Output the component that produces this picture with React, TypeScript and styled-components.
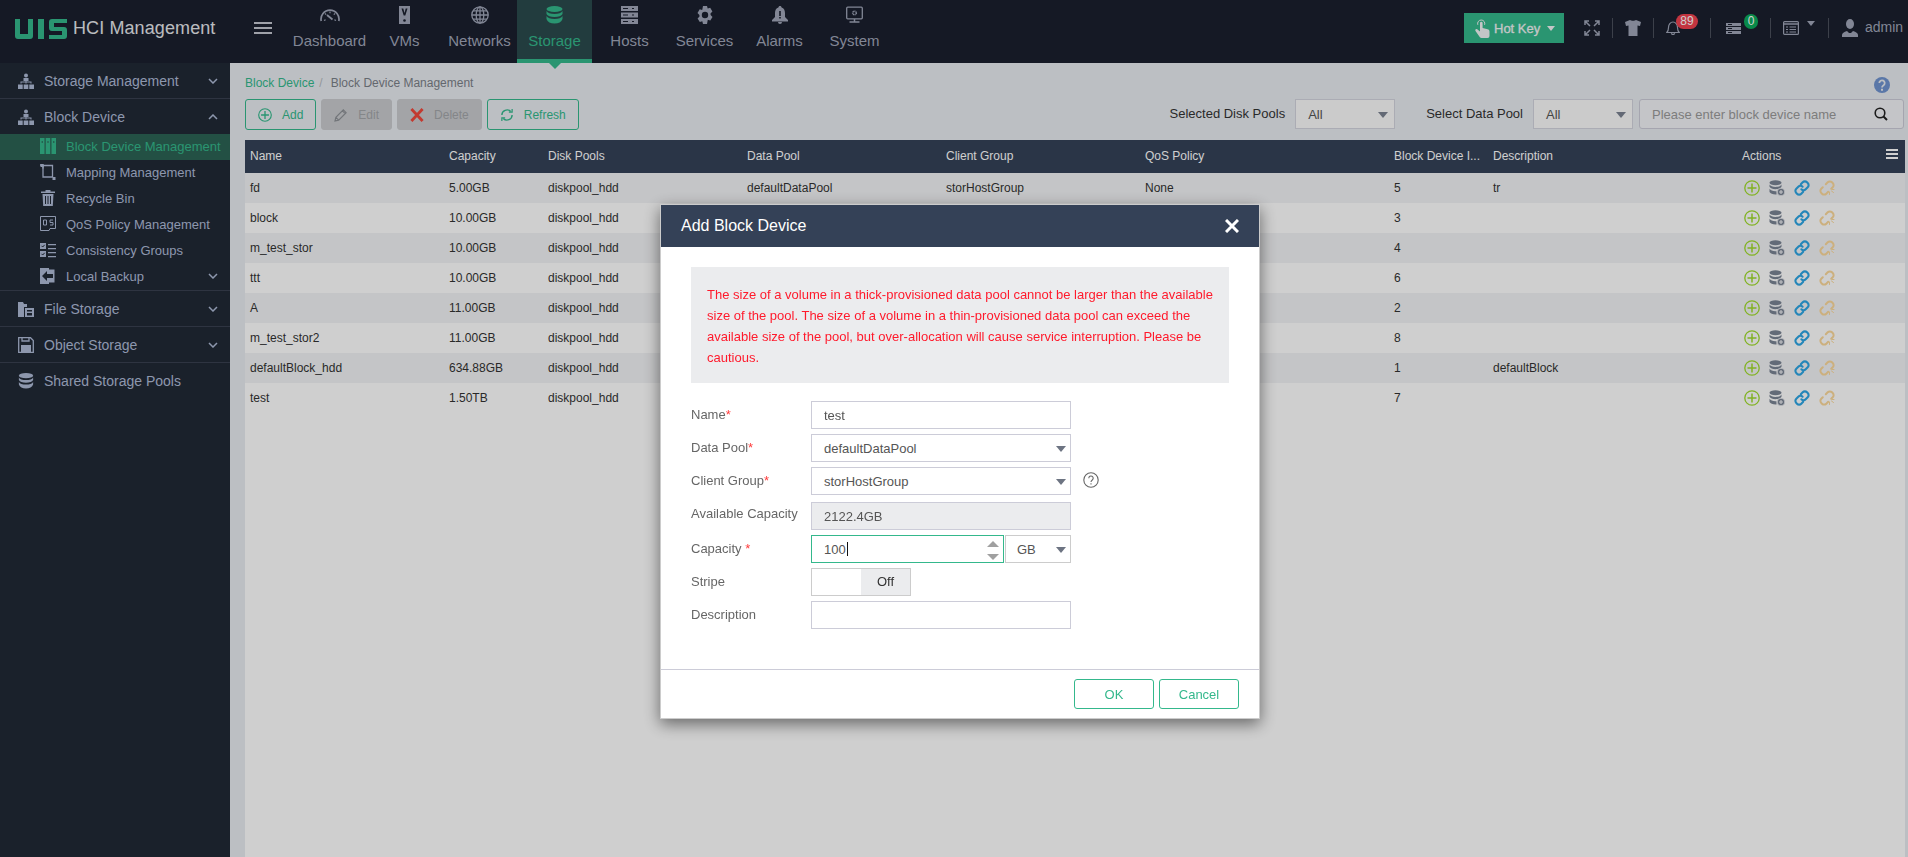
import React from 'react';
import styled, { createGlobalStyle } from 'styled-components';

const accent = '#34b88c';
const navGrey = '#a0a6b8';
const sideGrey = '#aebbd6';

const GlobalStyle = createGlobalStyle`
  html, body {
    margin: 0;
    height: 100%;
    overflow: hidden;
    background: #fff;
    font-family: "Liberation Sans", Arial, sans-serif;
  }
  #root { height: 100%; }
  * { box-sizing: border-box; }
`;

const Shell = styled.div`
  display: flex;
  flex-direction: column;
  height: 100vh;
`;

/* ---------- top bar ---------- */

const TopBar = styled.header`
  display: flex;
  height: 63px;
  flex-shrink: 0;
  background: #1a1f2e;
`;

const LogoBlock = styled.div`
  display: flex;
  align-items: center;
  gap: 6px;
  width: 254px;
  padding: 0 0 6px 15px;
`;

const LogoText = styled.span`
  font-size: 18px;
  letter-spacing: 0.1px;
  color: #e6e8ec;
`;

const Burger = styled.button`
  display: flex;
  flex-direction: column;
  gap: 3px;
  width: 38px;
  height: 12px;
  margin-top: 22px;
  padding: 0;
  border: 0;
  background: none;
  span {
    display: block;
    width: 18px;
    height: 2px;
    flex-shrink: 0;
    background: #c4c7d0;
  }
`;

const Nav = styled.nav`
  display: flex;
`;

const NavItem = styled.a<{ $active?: boolean }>`
  position: relative;
  display: flex;
  flex-direction: column;
  align-items: center;
  width: 75px;
  padding-top: 6px;
  font-size: 15px;
  color: ${p => (p.$active ? accent : navGrey)};
  background: ${p => (p.$active ? '#2b4b4d' : 'transparent')};
  border-bottom: 4px solid ${p => (p.$active ? accent : 'transparent')};
  svg { height: 18px; display: block; }
  span { margin-top: 8px; line-height: 18px; }
  ${p =>
    p.$active &&
    `&::after {
      content: '';
      position: absolute;
      left: 50%;
      bottom: -10px;
      margin-left: -6px;
      border: 6px solid transparent;
      border-bottom: 0;
      border-top-color: ${accent};
      z-index: 2;
    }`}
`;

const Tools = styled.div`
  display: flex;
  align-items: center;
  height: 56px;
  margin-left: auto;
`;

const HotKey = styled.button`
  display: flex;
  align-items: center;
  width: 100px;
  height: 30px;
  margin-right: 8px;
  padding: 0 0 0 10px;
  border: 0;
  font: 13px "Liberation Sans", Arial, sans-serif;
  -webkit-text-stroke: 0.3px #f2f4f5;
  color: #f2f4f5;
  background: ${accent};
  span { margin-left: 4px; }
`;

const Caret = styled.i<{ $color?: string; $shift?: number; $space: number }>`
  display: inline-block;
  width: 0;
  height: 0;
  margin: ${p => p.$shift || 0}px 0 0 ${p => p.$space}px;
  border: 4.5px solid transparent;
  border-bottom: 0;
  border-top: 5px solid ${p => p.$color || '#f2f4f5'};
`;

const Tool = styled.div<{ $w: number; $pad?: number }>`
  position: relative;
  display: flex;
  align-items: center;
  justify-content: ${p => (p.$pad === undefined ? 'center' : 'flex-start')};
  width: ${p => p.$w}px;
  height: 100%;
  padding-left: ${p => p.$pad || 0}px;
  font-size: 14px;
  color: ${navGrey};
`;

const AdminName = styled.span`
  margin-left: 7px;
  padding-bottom: 2px;
`;

const ToolSep = styled.div`
  width: 1px;
  height: 20px;
  flex-shrink: 0;
  background: #4a4f5c;
`;

const Badge = styled.em<{ $bg: string; $left: number; $w: number }>`
  position: absolute;
  top: 14px;
  left: ${p => p.$left}px;
  width: ${p => p.$w}px;
  height: 15px;
  border-radius: 8px;
  font-style: normal;
  font-size: 12px;
  line-height: 15px;
  text-align: center;
  color: #fff;
  background: ${p => p.$bg};
`;

/* ---------- sidebar ---------- */

const Body = styled.div`
  display: flex;
  flex: 1;
  min-height: 0;
`;

const Sidebar = styled.aside`
  width: 230px;
  flex-shrink: 0;
  background: #212936;
`;

const SideGroup = styled.div`
  border-bottom: 1px solid #394050;
  &:last-child { border-bottom: 0; }
`;

const SideHead = styled.div`
  display: flex;
  align-items: center;
  height: 35px;
  padding: 0 12px 0 18px;
  font-size: 14px;
  color: ${sideGrey};
  svg:first-child { width: 16px; height: 16px; margin-right: 10px; flex-shrink: 0; }
`;

const SubItem = styled.div<{ $active?: boolean }>`
  display: flex;
  align-items: center;
  height: 26px;
  padding: 0 12px 2px 40px;
  font-size: 13px;
  white-space: nowrap;
  color: ${p => (p.$active ? accent : sideGrey)};
  background: ${p => (p.$active ? '#2c6354' : 'transparent')};
  svg:first-child { width: 16px; height: 16px; margin-right: 10px; flex-shrink: 0; }
`;

const Chevron = styled.svg`
  width: 10px;
  height: 6px;
  margin-left: auto;
`;

/* ---------- main area ---------- */

const Main = styled.main`
  display: flex;
  flex: 1;
  flex-direction: column;
  min-width: 0;
  padding: 0 3px 0 15px;
  background: #e8ecf1;
`;

const Crumbs = styled.div`
  display: flex;
  align-items: center;
  height: 36px;
  padding-top: 3px;
  font-size: 12px;
  color: #7b8088;
  a { color: ${accent}; }
  i { margin: 0 8px 0 5px; font-style: normal; color: #b6b9bf; }
  svg { width: 16px; height: 16px; margin: 5px 15px 0 auto; }
`;

const ToolRow = styled.div`
  display: flex;
  align-items: flex-start;
  height: 31px;
  margin-bottom: 10px;
`;

const ActionButton = styled.button<{ $disabled?: boolean }>`
  display: flex;
  align-items: center;
  gap: 10px;
  height: 31px;
  margin-right: 5px;
  padding: 0 12px;
  border: 1px solid ${p => (p.$disabled ? '#c9cbce' : accent)};
  border-radius: 3px;
  font: 12px "Liberation Sans", Arial, sans-serif;
  color: ${p => (p.$disabled ? '#a3a5a9' : accent)};
  background: ${p => (p.$disabled ? '#c9cbce' : 'transparent')};
  svg { width: 14px; height: 14px; }
`;

const Filters = styled.div`
  display: flex;
  align-items: center;
  height: 30px;
  margin: 0 1px 0 auto;
  font-size: 13px;
  color: #333;
`;

const FilterLabel = styled.label`
  margin-right: 10px;
  padding-bottom: 2px;
`;

const FilterSelect = styled.div<{ $gap: number }>`
  position: relative;
  width: 100px;
  height: 30px;
  margin-right: ${p => p.$gap}px;
  padding-left: 12px;
  border: 1px solid #d3d4de;
  font-size: 13px;
  line-height: 30px;
  color: #555;
  background: #fafafa;
  &::after {
    content: '';
    position: absolute;
    top: 12px;
    right: 6px;
    border: 5px solid transparent;
    border-bottom: 0;
    border-top: 6px solid #7a8290;
  }
`;

const Search = styled.div`
  display: flex;
  align-items: center;
  justify-content: space-between;
  width: 265px;
  height: 30px;
  padding: 0 15px 0 12px;
  border: 1px solid #ccccd8;
  border-radius: 3px;
  font-size: 13px;
  color: #9a9a9a;
  background: #f2f3f7;
  svg { width: 14px; height: 14px; }
`;

const columns = '199px 99px 199px 199px 199px 249px 99px 249px 1fr';

const GridTable = styled.div`
  flex: 1;
  font-size: 12px;
  background: #fff;
`;

const HeadRow = styled.div`
  position: relative;
  display: grid;
  grid-template-columns: ${columns};
  align-items: center;
  height: 33px;
  padding-bottom: 2px;
  color: #fff;
  background: #344258;
  span { padding-left: 5px; }
  svg { position: absolute; top: 9px; right: 7px; width: 12px; height: 10px; }
`;

const Row = styled.div`
  display: grid;
  grid-template-columns: ${columns};
  align-items: center;
  height: 30px;
  color: #333;
  &:nth-child(even) { background: #f2f3f5; }
  span { padding-left: 5px; }
`;

const RowActions = styled.div`
  display: flex;
  gap: 9px;
  padding-left: 7px;
  svg { width: 16px; height: 16px; }
`;

/* ---------- dialog ---------- */

const Overlay = styled.div`
  position: fixed;
  inset: 0;
  z-index: 10;
  background: rgba(0, 0, 0, 0.19);
`;

const Modal = styled.div`
  position: absolute;
  top: 204px;
  left: 660px;
  display: flex;
  flex-direction: column;
  width: 600px;
  height: 515px;
  border: 1px solid rgba(0, 0, 0, 0.2);
  background: #fff;
  box-shadow: 0 5px 15px rgba(0, 0, 0, 0.5);
`;

const ModalHead = styled.div`
  display: flex;
  align-items: center;
  justify-content: space-between;
  height: 42px;
  padding: 0 20px;
  font-size: 16px;
  color: #fff;
  background: #344157;
  svg { width: 14px; height: 14px; }
`;

const ModalBody = styled.div`
  flex: 1;
  padding: 20px 30px 0;
`;

const Alert = styled.p`
  height: 116px;
  margin: 0 0 18px;
  padding: 17px 12px 0 16px;
  font-size: 13px;
  line-height: 21px;
  color: #ff1a2c;
  background: #ebecee;
`;

const Form = styled.div`
  display: grid;
  grid-template-columns: 120px 260px auto;
  row-gap: 5px;
  align-items: start;
  font-size: 13px;
  color: #666;
`;

const FieldLabel = styled.label<{ $lift?: number }>`
  display: flex;
  align-items: center;
  height: 28px;
  padding-bottom: ${p => p.$lift || 2}px;
  white-space: pre;
  b { font-weight: normal; color: #ff3b3b; }
`;

const Field = styled.div<{ $disabled?: boolean }>`
  grid-column: 2;
  display: flex;
  align-items: center;
  height: 28px;
  padding-left: 12px;
  border: 1px solid #ccccd8;
  color: #555;
  background: ${p => (p.$disabled ? '#ebecee' : '#fff')};
`;

const SelectField = styled(Field)`
  position: relative;
  grid-column: auto;
  &::after {
    content: '';
    position: absolute;
    top: 11px;
    right: 4px;
    border: 5px solid transparent;
    border-bottom: 0;
    border-top: 6px solid #6d7482;
  }
`;

const CapacityGroup = styled.div`
  display: flex;
  gap: 1px;
  height: 28px;
`;

const CapacityInput = styled(Field)`
  position: relative;
  width: 193px;
  border-color: ${accent};
  i { width: 1px; height: 14px; margin-left: 1px; background: #111; }
`;

const Spin = styled.div`
  position: absolute;
  top: 5px;
  right: 4px;
  display: flex;
  flex-direction: column;
  gap: 7px;
  span {
    border: 6px solid transparent;
    height: 0;
    width: 0;
  }
  span:first-child { border-top: 0; border-bottom: 6px solid #a0a0a0; }
  span:last-child { border-bottom: 0; border-top: 6px solid #a0a0a0; }
`;

const UnitSelect = styled(SelectField)`
  width: 66px;
  border-color: #ccc;
  padding-left: 11px;
`;

const Toggle = styled.div`
  display: flex;
  width: 100px;
  height: 28px;
  border: 1px solid #ccc;
  &::before { content: ''; flex: 1; background: #fff; }
  span {
    flex: 1;
    font-size: 13px;
    line-height: 26px;
    text-align: center;
    color: #333;
    background: #ebecee;
  }
`;

const HelpSlot = styled.div`
  height: 30px;
  padding: 5px 0 0 12px;
  svg { display: block; width: 16px; height: 16px; }
`;

const ModalFoot = styled.div`
  display: flex;
  justify-content: flex-end;
  gap: 5px;
  height: 49px;
  padding: 9px 20px 0 0;
  border-top: 1px solid #ccccd8;
`;

const FootButton = styled.button`
  width: 80px;
  height: 30px;
  border: 1px solid ${accent};
  border-radius: 3px;
  font: 13px "Liberation Sans", Arial, sans-serif;
  color: ${accent};
  background: #fff;
`;

/* ---------- icons ---------- */

const DbStack = ({ color = 'currentColor' }: { color?: string }) => (
  <svg viewBox="0 0 17 18" fill={color}>
    <ellipse cx="8.5" cy="3" rx="8" ry="3" />
    <path d="M.5 5c1 2 4 3 8 3s7-1 8-3v3c-1 2-4 3-8 3s-7-1-8-3z" />
    <path d="M.5 10c1 2 4 3 8 3s7-1 8-3v3c-1 3-4 4.500-8 4.500S1.500 16 .5 13z" />
  </svg>
);

const Org = () => (
  <svg viewBox="0 0 16 16" fill="currentColor">
    <circle cx="8" cy="2.500" r="2" />
    <path d="M5.500 5h5v3h-5zM2.500 8.500h11v2h-1v-1h-9v1h-1zM7.500 8h1v2.500h-1z" />
    <path d="M0 11.500h4.700V16H0zM5.700 11.500h4.600V16H5.700zM11.300 11.500H16V16h-4.700z" />
  </svg>
);

const Down = () => (
  <Chevron viewBox="0 0 10 6" fill="none" stroke="currentColor" strokeWidth="1.500">
    <path d="M1 1l4 4 4-4" />
  </Chevron>
);

const Up = () => (
  <Chevron viewBox="0 0 10 6" fill="none" stroke="currentColor" strokeWidth="1.500">
    <path d="M1 5l4-4 4 4" />
  </Chevron>
);

const PlusCircle = ({ color }: { color: string }) => (
  <svg viewBox="0 0 16 16" fill="none" stroke={color} strokeWidth="1.300">
    <circle cx="8" cy="8" r="7.200" />
    <path d="M8 3.500v9M3.500 8h9" strokeWidth="1.500" />
  </svg>
);

const LinkIcon = ({ color }: { color: string }) => (
  <svg viewBox="0 0 16 16" fill="none" stroke={color} strokeWidth="2.100" strokeLinecap="round">
    <path d="M6.800 4.200l1.900-1.900a3 3 0 0 1 4.300 0l.7.7a3 3 0 0 1 0 4.300l-2 2a3 3 0 0 1-4.300 0" />
    <path d="M9.200 11.800l-1.900 1.900a3 3 0 0 1-4.300 0l-.7-.7a3 3 0 0 1 0-4.300l2-2a3 3 0 0 1 4.300 0" />
  </svg>
);

const BrokenLink = ({ color }: { color: string }) => (
  <svg viewBox="0 0 16 16" fill="none" stroke={color} strokeWidth="2" strokeLinecap="round">
    <path d="M6.800 4.200l1.900-1.900a3 3 0 0 1 4.300 0l.7.7a3 3 0 0 1 0 4.300l-1.500 1.500" />
    <path d="M9.200 11.800l-1.900 1.900a3 3 0 0 1-4.300 0l-.7-.7a3 3 0 0 1 0-4.300l1.500-1.500" />
    <path d="M10.500 12v2.500M12.500 11l2 1.500M13 9.500h2" strokeWidth="1" />
  </svg>
);

const DbAdd = () => (
  <svg viewBox="0 0 16 16">
    <g fill="#7a8494">
      <ellipse cx="6.500" cy="2.800" rx="6" ry="2.500" />
      <path d="M.5 4.500c1 1.700 3 2.400 6 2.400s5-.7 6-2.400v2.300c-1 1.700-3 2.400-6 2.400s-5-.7-6-2.400z" />
      <path d="M.5 8.800c1 1.700 3 2.400 6 2.400h1v3.300h-1c-3 0-5-.7-6-2.400z" />
    </g>
    <circle cx="12" cy="12" r="3.800" fill="#7a8494" stroke="#f2f3f5" strokeWidth=".8" />
    <path d="M10 12h4M12 10v4" stroke="#f2f3f5" strokeWidth="1.100" />
  </svg>
);

const nav = [
  {
    label: 'Dashboard',
    icon: (
      <svg viewBox="0 0 20 14" width="20" fill="none" stroke="currentColor" strokeWidth="1.700">
        <path d="M1.200 13a9 9 0 1 1 17.600 0" />
        <path d="M4 12.500l1.600-.8M16 12.500l-1.600-.8M10 3.500v1.800M5 5.500l1.200 1.200M15 5.500l-1.200 1.200" strokeWidth="1.200" />
        <path d="M7 7l5.500 4.500" strokeWidth="1.800" />
      </svg>
    ),
  },
  {
    label: 'VMs',
    icon: (
      <svg viewBox="0 0 11 18" width="11">
        <path d="M0 0h11v18H0z" fill="currentColor" />
        <path d="M2.500 2.500h1.800L5.500 7l1.200-4.500h1.800L6.300 9.500H4.700z" fill="#1a1f2e" />
        <circle cx="5.500" cy="14.500" r="1.300" fill="#1a1f2e" />
      </svg>
    ),
  },
  {
    label: 'Networks',
    icon: (
      <svg viewBox="0 0 18 18" width="18" fill="none" stroke="currentColor" strokeWidth="1.300">
        <circle cx="9" cy="9" r="8.200" />
        <ellipse cx="9" cy="9" rx="3.800" ry="8.200" />
        <path d="M9 .8v16.400M.8 9h16.400M2 4.800h14M2 13.200h14" />
      </svg>
    ),
  },
  { label: 'Storage', icon: <DbStack />, active: true },
  {
    label: 'Hosts',
    icon: (
      <svg viewBox="0 0 17 18" width="17">
        <path d="M0 0h17v5H0zM0 6.500h17v5H0zM0 13h17v5H0z" fill="currentColor" />
        <path d="M2 2h5v1H2zM2 8.500h5v1H2zM2 15h5v1H2zM11 2h2v1h-2zM11 8.500h2v1h-2zM11 15h2v1h-2z" fill="#1a1f2e" />
      </svg>
    ),
  },
  {
    label: 'Services',
    icon: (
      <svg viewBox="0 0 18 18" width="18">
        <path
          fill="currentColor"
          fillRule="evenodd"
          d="M7 0h4l.7 2.600 2.500-.8 2.200 3.700-1.900 1.900.1 1.600 1.900 1.900-2.200 3.700-2.500-.8L11 18H7l-.7-2.700-2.500.8-2.200-3.700 1.900-1.900-.1-1.600-1.900-1.900 2.200-3.700 2.500.8zM9 5.800a3.200 3.200 0 1 0 0 6.400 3.200 3.200 0 0 0 0-6.400z"
        />
      </svg>
    ),
  },
  {
    label: 'Alarms',
    icon: (
      <svg viewBox="0 0 16 18" width="16">
        <path
          fill="currentColor"
          d="M8 0c1 0 1.500.6 1.600 1.500C12 2.300 13 4.500 13 7v4l3 3v1.500H0V14l3-3V7c0-2.500 1-4.700 3.400-5.500C6.500.6 7 0 8 0zM6 16h4a2 2 0 0 1-4 0z"
        />
        <path d="M7.200 5h1.600v5H7.200zM7.200 11h1.600v1.600H7.200z" fill="#1a1f2e" />
      </svg>
    ),
  },
  {
    label: 'System',
    icon: (
      <svg viewBox="0 0 17 17" width="17" fill="none" stroke="currentColor">
        <rect x=".7" y=".7" width="15.600" height="11.600" rx="1" strokeWidth="1.300" />
        <path d="M8.500 12.500v2.500M3.500 15.500h10" strokeWidth="1.500" />
        <circle cx="8.500" cy="6.500" r="1.800" strokeWidth="1.600" strokeDasharray="1 .5" />
      </svg>
    ),
  },
];

// Only the first row's pool columns show above the dialog
const rows = [
  { name: 'fd', size: '5.00GB', id: '5', desc: 'tr', dataPool: 'defaultDataPool', group: 'storHostGroup', qos: 'None' },
  { name: 'block', size: '10.00GB', id: '3' },
  { name: 'm_test_stor', size: '10.00GB', id: '4' },
  { name: 'ttt', size: '10.00GB', id: '6' },
  { name: 'A', size: '11.00GB', id: '2' },
  { name: 'm_test_stor2', size: '11.00GB', id: '8' },
  { name: 'defaultBlock_hdd', size: '634.88GB', id: '1', desc: 'defaultBlock' },
  { name: 'test', size: '1.50TB', id: '7' },
];

const headers = ['Name', 'Capacity', 'Disk Pools', 'Data Pool', 'Client Group', 'QoS Policy', 'Block Device I...', 'Description', 'Actions'];

const App: React.FC = () => (
  <Shell>
    <GlobalStyle />
    <TopBar>
      <LogoBlock>
        <svg viewBox="0 0 52 20" width="52" height="20" fill={accent}>
          <path d="M0 0h5v15h8V0h5v17a3 3 0 0 1-3 3H3a3 3 0 0 1-3-3z" />
          <path d="M23 0h6v20h-6z" />
          <path d="M37 0h15v4H39v4h10a3 3 0 0 1 3 3v6a3 3 0 0 1-3 3H34v-4h13v-4H37a3 3 0 0 1-3-3V3a3 3 0 0 1 3-3z" />
        </svg>
        <LogoText>HCI Management</LogoText>
      </LogoBlock>
      <Burger>
        <span />
        <span />
        <span />
      </Burger>
      <Nav>
        {nav.map(n => (
          <NavItem key={n.label} $active={n.active}>
            {n.icon}
            <span>{n.label}</span>
          </NavItem>
        ))}
      </Nav>
      <Tools>
        <HotKey>
          <svg viewBox="0 0 16 20" width="16" height="20" fill="currentColor">
            <path d="M6 5a1.300 1.300 0 0 1 2.600 0v5l5 1.200c1.200.3 1.900 1.100 1.900 2.300V18a2 2 0 0 1-2 2H7.500a2 2 0 0 1-1.600-.8L1.500 13c-.8-1.200.8-2.600 2-1.500L6 13.500z" />
            <path d="M3.800 6.800a3.600 3.600 0 1 1 6.800 0" fill="none" stroke="currentColor" />
          </svg>
          <span>Hot Key</span>
          <Caret $space={7} />
        </HotKey>
        <Tool $w={40}>
          <svg viewBox="0 0 16 16" width="16" height="16" fill="none" stroke="currentColor" strokeWidth="1.500">
            <path d="M1 5V1h4M1 1l5 5M15 5V1h-4M15 1l-5 5M1 11v4h4M1 15l5-5M15 11v4h-4M15 15l-5-5" />
          </svg>
        </Tool>
        <ToolSep />
        <Tool $w={40}>
          <svg viewBox="0 0 16 16" width="16" height="16" fill="currentColor">
            <path d="M5 0c1 1 5 1 6 0l5 2-1 4-2.500-.6V16h-9V5.400L1 6 0 2z" />
          </svg>
        </Tool>
        <ToolSep />
        <Tool $w={56} $pad={12}>
          <svg viewBox="0 0 14 14" width="14" height="14" fill="none" stroke="currentColor" strokeWidth="1.200">
            <path d="M.8 11.500c1.500-1.500 1.700-3 1.700-5C2.500 3.500 4.500 1 7 1s4.500 2.500 4.500 5.500c0 2 .2 3.500 1.700 5z" />
            <path d="M5.300 12.300a1.800 1.800 0 0 0 3.400 0" />
          </svg>
          <Badge $bg="#f0424f" $left={22} $w={22}>
            89
          </Badge>
        </Tool>
        <ToolSep />
        <Tool $w={59} $pad={15}>
          <svg viewBox="0 0 15 11" width="15" height="11">
            <path d="M0 0h15v3H0zM0 4h15v3H0zM0 8h15v3H0z" fill="currentColor" />
            <path d="M2 1h4v1H2zM2 5h4v1H2zM2 9h4v1H2z" fill="#1a1f2e" />
          </svg>
          <Badge $bg="#0caa5c" $left={33} $w={14}>
            0
          </Badge>
        </Tool>
        <ToolSep />
        <Tool $w={57} $pad={12}>
          <svg viewBox="0 0 16 14" width="16" height="14" fill="none" stroke="currentColor">
            <rect x=".6" y=".6" width="14.800" height="12.800" rx="1" strokeWidth="1.200" />
            <path d="M.6 3h14.800" strokeWidth="1.500" />
            <path d="M3 6h2M3 8.500h2M3 11h2M6.500 6H13M6.500 8.500H13M6.500 11H13" />
          </svg>
          <Caret $color={navGrey} $shift={-9} $space={8} />
        </Tool>
        <ToolSep />
        <Tool $w={79} $pad={13}>
          <svg viewBox="0 0 16 18" width="16" height="18" fill="currentColor">
            <ellipse cx="8" cy="5" rx="4" ry="5" />
            <path d="M0 18v-2c0-2 2-3 5-4l2 2h2l2-2c3 1 5 2 5 4v2z" />
          </svg>
          <AdminName>admin</AdminName>
        </Tool>
      </Tools>
    </TopBar>
    <Body>
      <Sidebar>
        <SideGroup>
          <SideHead>
            <Org />
            Storage Management
            <Down />
          </SideHead>
        </SideGroup>
        <SideGroup>
          <SideHead>
            <Org />
            Block Device
            <Up />
          </SideHead>
          <SubItem $active>
            <svg viewBox="0 0 16 16" fill={accent}>
              <path d="M0 0h4.500v16H0zM5.700 0h4.500v16H5.700zM11.500 0H16v16h-4.500z" />
              <path d="M1.700 3h1v2h-1zM7.500 3h1v2h-1zM13.300 3h1v2h-1z" fill="#2c6354" />
            </svg>
            Block Device Management
          </SubItem>
          <SubItem>
            <svg viewBox="0 0 16 16" fill="none" stroke="currentColor" strokeWidth="1.300">
              <path d="M3 1.500h9.500V13H3z" />
              <path d="M.5 0h3v3h-3zM12.500 13h3v3h-3z" fill="currentColor" stroke="none" />
              <path d="M0 1h3v3.500" />
            </svg>
            Mapping Management
          </SubItem>
          <SubItem>
            <svg viewBox="0 0 16 16" fill="currentColor">
              <path d="M5.500 0h5v1.500H15V3H1V1.500h4.500z" />
              <path d="M2.500 4h11l-.7 12H3.200zM5 6v8h1V6zM7.500 6v8h1V6zM10 6v8h1V6z" fillRule="evenodd" />
            </svg>
            Recycle Bin
          </SubItem>
          <SubItem>
            <svg viewBox="0 0 16 16" fill="none" stroke="currentColor">
              <path d="M.5.500h15v12H10l-1 2H.5z" />
              <path d="M3.500 4h3v5h-3zM13 4h-3v2.500h3V9h-3" />
            </svg>
            QoS Policy Management
          </SubItem>
          <SubItem>
            <svg viewBox="0 0 16 16" fill="currentColor">
              <path d="M0 1h6v6H0zM0 9h6v6H0z" />
              <path d="M8 2h8v1.200H8zM8 6h8v1.200H8zM8 10h8v1.200H8zM8 14h8v1.200H8z" />
              <path d="M1.500 3.800l1.200 1.200 2-2.200M1.500 11.800l1.200 1.200 2-2.200" stroke="#212936" fill="none" />
            </svg>
            Consistency Groups
          </SubItem>
          <SubItem>
            <svg viewBox="0 0 16 16" fill="currentColor">
              <path d="M0 0h16v16H0z" />
              <path d="M9 3l5 5-5 5v-3H3V6h6z" transform="rotate(180 8 8)" fill="#212936" />
              <path d="M9 0h7v16H9v-1.500h5.500v-13H9z" fill="#212936" />
            </svg>
            Local Backup
            <Down />
          </SubItem>
        </SideGroup>
        <SideGroup>
          <SideHead>
            <svg viewBox="0 0 16 16" fill="currentColor">
              <path d="M0 1h5l1 2h3v3H6v10H0z" />
              <path d="M7 7h9v9H7zM9 9v1.500h5V9zM9 12v2.500h5V12z" fillRule="evenodd" />
            </svg>
            File Storage
            <Down />
          </SideHead>
        </SideGroup>
        <SideGroup>
          <SideHead>
            <svg viewBox="0 0 16 16" fill="none" stroke="currentColor" strokeWidth="1.300">
              <path d="M.7.700h11.800l2.800 2.800v11.800H.7z" />
              <path d="M3 8h10v8H3z" fill="currentColor" stroke="none" />
              <path d="M4 1v3h7V1" />
            </svg>
            Object Storage
            <Down />
          </SideHead>
        </SideGroup>
        <SideGroup>
          <SideHead>
            <DbStack />
            Shared Storage Pools
          </SideHead>
        </SideGroup>
      </Sidebar>
      <Main>
        <Crumbs>
          <a>Block Device</a>
          <i>/</i>
          Block Device Management
          <svg viewBox="0 0 16 16">
            <circle cx="8" cy="8" r="8" fill="#6f93cf" />
            <path d="M5.300 6a2.700 2.700 0 1 1 4.300 2.200C8.600 8.900 8 9.300 8 10.500" fill="none" stroke="#e8ecf1" strokeWidth="1.800" />
            <path d="M7 11.700h2v2H7z" fill="#e8ecf1" />
          </svg>
        </Crumbs>
        <ToolRow>
          <ActionButton>
            <PlusCircle color={accent} />
            Add
          </ActionButton>
          <ActionButton $disabled>
            <svg viewBox="0 0 15 15" fill="none" stroke="#8d9096" strokeWidth="1.200">
              <path d="M1 14l1-4 8-8 3 3-8 8zM9 3l3 3M2 10l3 3" />
            </svg>
            Edit
          </ActionButton>
          <ActionButton $disabled>
            <svg viewBox="0 0 15 15" stroke="#f0483c" strokeWidth="3">
              <path d="M1.500 1l12 13M13.500 1l-12 13" />
            </svg>
            Delete
          </ActionButton>
          <ActionButton>
            <svg viewBox="0 0 15 15" fill="none" stroke={accent} strokeWidth="1.500">
              <path d="M2 7.500a5.500 5.500 0 0 1 9.500-3.700M13 7.500a5.500 5.500 0 0 1-9.500 3.700" />
              <path d="M9.500 4.500h3.500V1M5.500 10.500H2V14" strokeWidth="1.300" />
            </svg>
            Refresh
          </ActionButton>
          <Filters>
            <FilterLabel>Selected Disk Pools</FilterLabel>
            <FilterSelect $gap={31}>All</FilterSelect>
            <FilterLabel>Select Data Pool</FilterLabel>
            <FilterSelect $gap={6}>All</FilterSelect>
            <Search>
              Please enter block device name
              <svg viewBox="0 0 14 14" fill="none" stroke="#222" strokeWidth="1.600">
                <circle cx="6" cy="6" r="4.800" />
                <path d="M9.500 9.500L13 13" strokeWidth="2" />
              </svg>
            </Search>
          </Filters>
        </ToolRow>
        <GridTable>
          <HeadRow>
            {headers.map(h => (
              <span key={h}>{h}</span>
            ))}
            <svg viewBox="0 0 12 10" fill="#fff">
              <path d="M0 0h12v2H0zM0 4h12v2H0zM0 8h12v2H0z" />
            </svg>
          </HeadRow>
          {rows.map(r => (
            <Row key={r.name}>
              <span>{r.name}</span>
              <span>{r.size}</span>
              <span>diskpool_hdd</span>
              <span>{r.dataPool}</span>
              <span>{r.group}</span>
              <span>{r.qos}</span>
              <span>{r.id}</span>
              <span>{r.desc}</span>
              <RowActions>
                <PlusCircle color="#a0dc2c" />
                <DbAdd />
                <LinkIcon color="#2ea6e4" />
                <BrokenLink color="#fcd99c" />
              </RowActions>
            </Row>
          ))}
        </GridTable>
      </Main>
    </Body>
    <Overlay>
      <Modal>
        <ModalHead>
          Add Block Device
          <svg viewBox="0 0 14 14" stroke="#fff" strokeWidth="3">
            <path d="M1 1l12 12M13 1L1 13" />
          </svg>
        </ModalHead>
        <ModalBody>
          <Alert>
            The size of a volume in a thick-provisioned data pool cannot be larger than the available size of the pool.
            The size of a volume in a thin-provisioned data pool can exceed the available size of the pool, but
            over-allocation will cause service interruption. Please be cautious.
          </Alert>
          <Form>
            <FieldLabel>
              Name<b>*</b>
            </FieldLabel>
            <Field>test</Field>
            <span />
            <FieldLabel>
              Data Pool<b>*</b>
            </FieldLabel>
            <SelectField>defaultDataPool</SelectField>
            <span />
            <FieldLabel>
              Client Group<b>*</b>
            </FieldLabel>
            <SelectField>storHostGroup</SelectField>
            <HelpSlot>
              <svg viewBox="0 0 16 16" fill="none" stroke="#666" strokeWidth="1.100">
                <circle cx="8" cy="8" r="7.200" />
                <path d="M5.800 6.200a2.200 2.200 0 1 1 3.500 1.800C8.500 8.600 8 9 8 10" />
                <path d="M8 11.200v1.400" />
              </svg>
            </HelpSlot>
            <FieldLabel $lift={6}>Available Capacity</FieldLabel>
            <Field $disabled>2122.4GB</Field>
            <span />
            <FieldLabel>
              Capacity <b>*</b>
            </FieldLabel>
            <CapacityGroup>
              <CapacityInput>
                100
                <i />
                <Spin>
                  <span />
                  <span />
                </Spin>
              </CapacityInput>
              <UnitSelect>GB</UnitSelect>
            </CapacityGroup>
            <span />
            <FieldLabel>Stripe</FieldLabel>
            <Toggle>
              <span>Off</span>
            </Toggle>
            <span />
            <FieldLabel>Description</FieldLabel>
            <Field />
          </Form>
        </ModalBody>
        <ModalFoot>
          <FootButton>OK</FootButton>
          <FootButton>Cancel</FootButton>
        </ModalFoot>
      </Modal>
    </Overlay>
  </Shell>
);

export default App;
